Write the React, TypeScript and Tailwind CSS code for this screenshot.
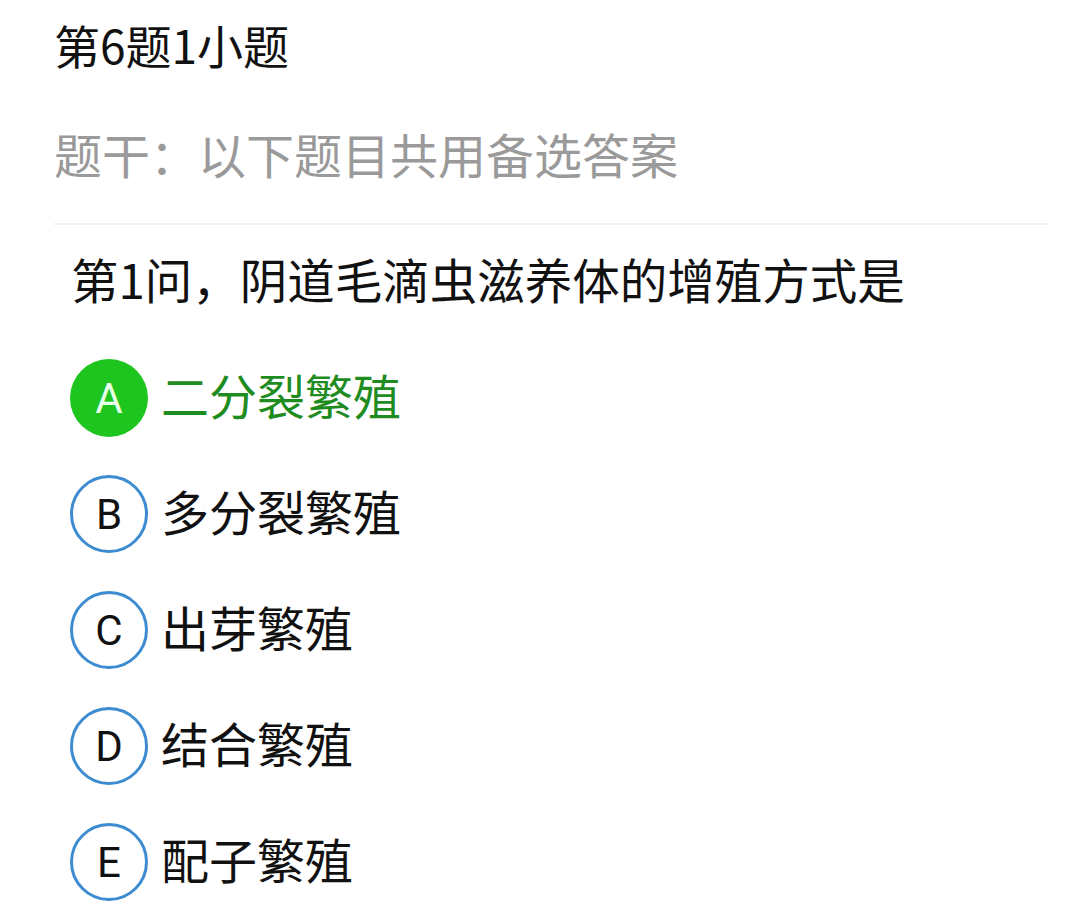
const options = [
  { key: 'A', text: '二分裂繁殖', correct: true },
  { key: 'B', text: '多分裂繁殖' },
  { key: 'C', text: '出芽繁殖' },
  { key: 'D', text: '结合繁殖' },
  { key: 'E', text: '配子繁殖' },
];

const cjk = { fontFamily: '"Noto Sans CJK SC", "Noto Sans", sans-serif' };
const latin = { fontFamily: 'Roboto, "Liberation Sans", sans-serif' };

export default function App() {
  return (
    <div className="min-h-screen w-[1080px] bg-white pl-[54px] pr-[32px]" style={cjk}>
      <div className="pt-[14px] text-[46px] leading-[60px] text-[#111]">第6题1小题</div>

      <div className="mt-[49px] text-[48px] leading-[60px] text-[#9a9a9a]">题干：以下题目共用备选答案</div>

      <div className="mt-[40px] h-[2px] bg-[#f1f1f1]" />

      <div className="pl-[17px]">
        <div className="mt-[24px] text-[47.5px] leading-[60px] text-[#111]">第1问，阴道毛滴虫滋养体的增殖方式是</div>

        <div className="mt-[50px] flex flex-col gap-[38px]">
          {options.map(o => (
            <div key={o.key} className="-ml-[1px] flex items-center gap-[13px]">
              {o.correct ? (
                <div
                  className="flex h-[78px] w-[78px] items-center justify-center rounded-full bg-[#1ec51e] text-[42px] text-[#e8ffe8]"
                  style={latin}
                >
                  {o.key}
                </div>
              ) : (
                <div
                  className="flex h-[78px] w-[78px] items-center justify-center rounded-full border-[3px] border-[#3d8bd0] text-[42px] text-[#111]"
                  style={latin}
                >
                  {o.key}
                </div>
              )}
              <span className={`pb-[8px] text-[48px] leading-[60px] ${o.correct ? 'text-[#1f8c1f]' : 'text-[#111]'}`}>
                {o.text}
              </span>
            </div>
          ))}
        </div>
      </div>
    </div>
  );
}
